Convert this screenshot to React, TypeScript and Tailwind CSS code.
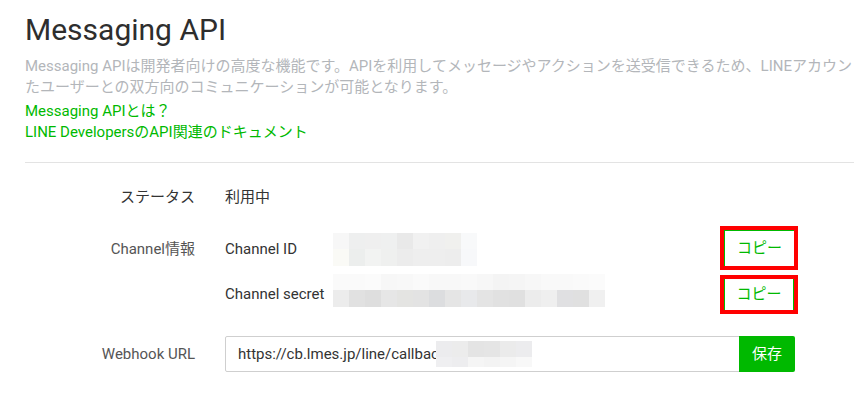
import React from 'react';

// モザイク（ぼかし）のセル色
const idCells = [
  ['#f7f7f7', '#eeefef', '#efefef', '#eff0f0', '#e9e9e9', '#f1f1f1', '#efefef', '#f0f0ee', '#f8f9fa'],
  ['#fafaf6', '#eceeed', '#f2f3f2', '#eff0ef', '#ececec', '#eeeeee', '#eeeeee', '#ededed', '#f7f8fa'],
];

const secretCells = [
  ['#fafafa', '#fafafa', '#fbfbfb', '#f7f7f7', '#f8f8f8', '#fafafa', '#f8f8f8', '#f8f8f8', '#f9f9f9', '#f7f7f7', '#f4f4f4', '#f5f5f5', '#f7f7f7', '#f9f9f9', '#f9f9f9', '#fafafa', '#fbfbfb'],
  ['#ececec', '#e1e1e1', '#dedede', '#e6e6e6', '#e4e4e2', '#e3e3e3', '#dcdddf', '#e5e5e5', '#e8e9eb', '#e4e4e4', '#e1e1e1', '#e0e0e0', '#ececec', '#efefef', '#e0e0e2', '#e0e0e0', '#f0f0f0'],
];

const urlCells = [
  ['#ececee', '#ececec', '#e4e4e4', '#e5e5e5', '#ebebeb', '#ececee'],
  ['#efeff1', '#ededef', '#f5f5f5', '#f3f3f3', '#f5f5f5', '#f8f8f8'],
];

function Mosaic({ cells, rowHeights }: { cells: string[][]; rowHeights: number[] }) {
  return (
    <div className="flex flex-col">
      {cells.map((row, i) => (
        <div key={i} className="flex">
          {row.map((c, j) => (
            <div key={j} className="w-4" style={{ backgroundColor: c, height: rowHeights[i] }} />
          ))}
        </div>
      ))}
    </div>
  );
}

function CopyButton({ sides, h }: { sides: string; h: string }) {
  return (
    <div className={`border-4 border-[#ff0000] ${h}`}>
      <button className={`flex h-full w-[70px] items-center justify-center bg-white text-[15px] text-[#00b900] border-[#00b900] ${sides}`}>
        コピー
      </button>
    </div>
  );
}

export default function App() {
  return (
    <div className="h-[393px] w-[854px] overflow-hidden bg-white pl-[25px] font-[Roboto,'Noto_Sans_CJK_JP',sans-serif]">
      <h1 className="pt-3 text-[30px] leading-[36px] font-normal text-[#2e2e2e]">Messaging API</h1>

      <p className="mt-[8px] whitespace-nowrap text-[15px] leading-[21px] text-[#b3b6ba]">
        Messaging APIは開発者向けの高度な機能です。APIを利用してメッセージやアクションを送受信できるため、LINEアカウントを友だち追加し
        <br />
        たユーザーとの双方向のコミュニケーションが可能となります。
      </p>

      <div className="mt-[3px] flex flex-col text-[15px] leading-[21px] text-[#00b900]">
        <a href="#">Messaging APIとは？</a>
        <a href="#">LINE DevelopersのAPI関連のドキュメント</a>
      </div>

      <div className="mt-[19px] h-px w-[900px] bg-[#e3e3e3]" />

      <div className="mt-[14px] text-[15px]">
        {/* ステータス */}
        <div className="flex h-10 items-center">
          <div className="w-[170px] text-right text-[#333]">ステータス</div>
          <div className="ml-[30px] text-[#333]">利用中</div>
        </div>

        {/* Channel情報 */}
        <div className="mt-[10px] flex">
          <div className="flex h-11 w-[170px] items-center justify-end text-[#555]">Channel情報</div>
          <div className="ml-[30px] flex w-[573px] flex-col">
            <div className="flex h-11 items-center">
              <div className="w-[108px] text-[#333]">Channel ID</div>
              <Mosaic cells={idCells} rowHeights={[16, 17]} />
              <div className="ml-auto -mt-[2px]">
                <CopyButton sides="border-l border-t" h="h-11" />
              </div>
            </div>
            <div className="mt-[3px] flex h-10 items-center">
              <div className="w-[108px] text-[#333]">Channel secret</div>
              <div className="mb-[8px]">
                <Mosaic cells={secretCells} rowHeights={[16, 17]} />
              </div>
              <div className="ml-auto">
                <CopyButton sides="border-l border-r" h="h-[39px]" />
              </div>
            </div>
          </div>
        </div>

        {/* Webhook URL */}
        <div className="mt-[22px] flex h-9 items-center">
          <div className="w-[170px] text-right text-[#555]">Webhook URL</div>
          <div className="ml-[30px] flex">
            <div className="flex h-9 w-[515px] items-center rounded-l-[2px] border border-[#cfcfcf] pl-[12px] text-[#333]">
              <span>https://cb.lmes.jp/line/callbac</span>
              <div className="-ml-[3px]">
                <Mosaic cells={urlCells} rowHeights={[16, 10]} />
              </div>
            </div>
            <button className="-ml-px h-9 w-14 rounded-r-[2px] bg-[#00b900] text-[15px] text-white">保存</button>
          </div>
        </div>
      </div>
    </div>
  );
}
